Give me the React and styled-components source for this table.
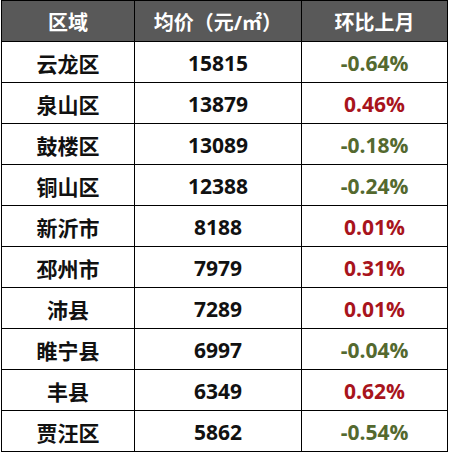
import React from "react";
import styled, { createGlobalStyle } from "styled-components";

const Global = createGlobalStyle`
  html, body { margin: 0; padding: 0; background: #ffffff; }
  body { font-family: "Open Sans", "Noto Sans CJK SC", sans-serif; }
`;

const Page = styled.div`
  padding: 0 0 0 1px;
`;

const Grid = styled.div`
  display: grid;
  grid-template-columns: 132px 166px 145px;
  grid-auto-rows: 40px;
  gap: 1px;
  width: 445px;
  background: #000;
  border: 1px solid #000;
`;

const HeadCell = styled.div`
  background: #595959;
  color: #ffffff;
  display: flex;
  align-items: center;
  justify-content: center;
  font-family: "Open Sans", "Noto Sans CJK SC", sans-serif;
  font-weight: 700;
  font-size: 20px;
  white-space: nowrap;
`;

const Cell = styled.div`
  background: #ffffff;
  color: ${(p) => p.$color || "#111111"};
  display: flex;
  align-items: center;
  justify-content: center;
  padding-top: 1px;
  font-family: "Open Sans", "Noto Sans CJK SC", sans-serif;
  font-weight: 700;
  font-size: 21px;
  white-space: nowrap;
`;

const rows = [
  ["云龙区", "15815", "-0.64%"],
  ["泉山区", "13879", "0.46%"],
  ["鼓楼区", "13089", "-0.18%"],
  ["铜山区", "12388", "-0.24%"],
  ["新沂市", "8188", "0.01%"],
  ["邳州市", "7979", "0.31%"],
  ["沛县", "7289", "0.01%"],
  ["睢宁县", "6997", "-0.04%"],
  ["丰县", "6349", "0.62%"],
  ["贾汪区", "5862", "-0.54%"],
];

export default function App() {
  return (
    <Page>
      <Global />
      <Grid>
        <HeadCell>区域</HeadCell>
        <HeadCell>均价（元/㎡）</HeadCell>
        <HeadCell>环比上月</HeadCell>
        {rows.map(([area, price, change]) => (
          <React.Fragment key={area}>
            <Cell>{area}</Cell>
            <Cell>{price}</Cell>
            <Cell $color={change.startsWith("-") ? "#54692f" : "#a8141c"}>
              {change}
            </Cell>
          </React.Fragment>
        ))}
      </Grid>
    </Page>
  );
}
